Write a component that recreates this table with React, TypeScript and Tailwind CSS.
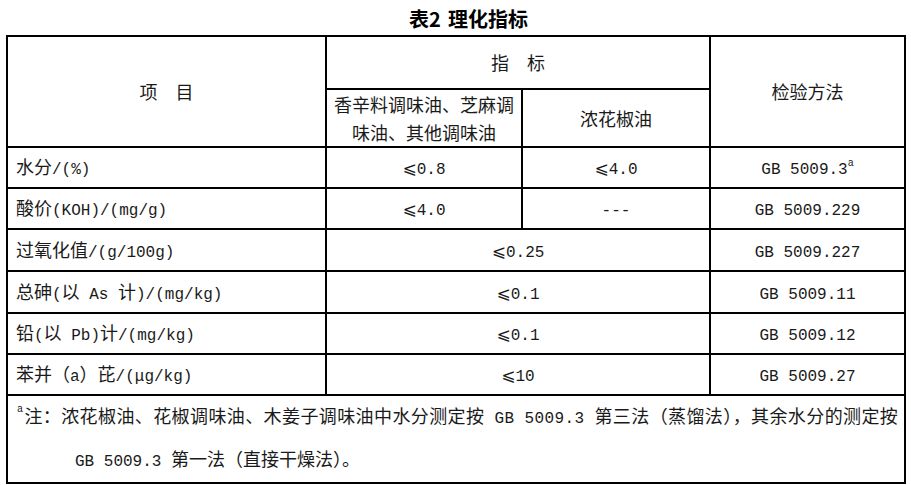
import React from "react";

const LATIN = /^[\x20-\x7E\u03BC]+$/;

function T({ s }: { s: string }) {
  const parts = s.split(/([\x20-\x7E\u03BC]+|⩽)/);
  return (
    <>
      {parts.map((p, i) => {
        if (p === "") return null;
        if (p === "⩽")
          return (
            <span key={i} className="font-['DejaVu_Sans'] text-[17px]">
              ⩽
            </span>
          );
        if (LATIN.test(p))
          return (
            <span key={i} className="font-['Liberation_Mono'] text-[16px] whitespace-pre">
              {p}
            </span>
          );
        return <span key={i}>{p}</span>;
      })}
    </>
  );
}

function Sup() {
  return (
    <span className="inline-block align-top font-['Liberation_Mono'] text-[10px] leading-none relative top-[-2px]">
      a
    </span>
  );
}

const cell = "border-2 border-black p-0 align-middle";

type Row = { label: string; a: string; b?: string; m: React.ReactNode; h: string };

const rows: Row[] = [
  {
    label: "水分/(%)",
    a: "⩽0.8",
    b: "⩽4.0",
    m: (
      <span className="inline-flex items-start">
        <T s="GB 5009.3" />
        <span className="font-['Liberation_Mono'] text-[10px] leading-none mt-[1px]">a</span>
      </span>
    ),
    h: "h-[41px]",
  },
  { label: "酸价(KOH)/(mg/g)", a: "⩽4.0", b: "---", m: <T s="GB 5009.229" />, h: "h-[41px]" },
  { label: "过氧化值/(g/100g)", a: "⩽0.25", m: <T s="GB 5009.227" />, h: "h-[42px]" },
  { label: "总砷(以 As 计)/(mg/kg)", a: "⩽0.1", m: <T s="GB 5009.11" />, h: "h-[42px]" },
  { label: "铅(以 Pb)计/(mg/kg)", a: "⩽0.1", m: <T s="GB 5009.12" />, h: "h-[41px]" },
  { label: "苯并（a）芘/(μg/kg)", a: "⩽10", m: <T s="GB 5009.27" />, h: "h-[41px]" },
];

export default function App() {
  return (
    <div className="w-[911px] h-[485px] bg-white text-[#1a1a1a] font-['Noto_Sans_CJK_SC',sans-serif] text-[18px] overflow-hidden">
      <div className="h-[35px] flex items-center justify-center pl-[26px] pt-[2px] text-[20px] font-bold text-black leading-none">
        <span>表2</span>
        <span className="ml-[7px]">理化指标</span>
      </div>
      <table className="ml-[6px] w-[898px] table-fixed border-collapse border-2 border-black">
        <colgroup>
          <col className="w-[319px]" />
          <col className="w-[196px]" />
          <col className="w-[188px]" />
          <col className="w-[195px]" />
        </colgroup>
        <tbody>
          <tr className="h-[53px]">
            <td rowSpan={2} className={`${cell} text-center`}>
              项　目
            </td>
            <td colSpan={2} className={`${cell} text-center`}>
              指　标
            </td>
            <td rowSpan={2} className={`${cell} text-center`}>
              检验方法
            </td>
          </tr>
          <tr className="h-[58px]">
            <td className={`${cell} text-center leading-[28px]`}>
              香辛料调味油、芝麻调
              <br />
              味油、其他调味油
            </td>
            <td className={`${cell} text-center`}>浓花椒油</td>
          </tr>
          {rows.map((r, i) => (
            <tr key={i} className={r.h}>
              <td className={`${cell} pl-[8px] text-left`}>
                <T s={r.label} />
              </td>
              {r.b !== undefined ? (
                <>
                  <td className={`${cell} text-center`}>
                    <T s={r.a} />
                  </td>
                  <td className={`${cell} text-center`}>
                    <T s={r.b} />
                  </td>
                </>
              ) : (
                <td colSpan={2} className={`${cell} text-center`}>
                  <T s={r.a} />
                </td>
              )}
              <td className={`${cell} text-center`}>{r.m}</td>
            </tr>
          ))}
          <tr className="h-[79px]">
            <td colSpan={4} className={`${cell} pl-[9px] leading-[39px] whitespace-nowrap`}>
              <div className="flex items-start tracking-[0.4px]">
                <span className="font-['Liberation_Mono'] text-[10px] leading-none mt-[9px] mr-[1px]">a</span>
                <span>
                  <T s="注：浓花椒油、花椒调味油、木姜子调味油中水分测定按 GB 5009.3 第三法（蒸馏法），其余水分的测定按" />
                </span>
              </div>
              <div className="pl-[58px]">
                <T s="GB 5009.3 第一法（直接干燥法）。" />
              </div>
            </td>
          </tr>
        </tbody>
      </table>
    </div>
  );
}
